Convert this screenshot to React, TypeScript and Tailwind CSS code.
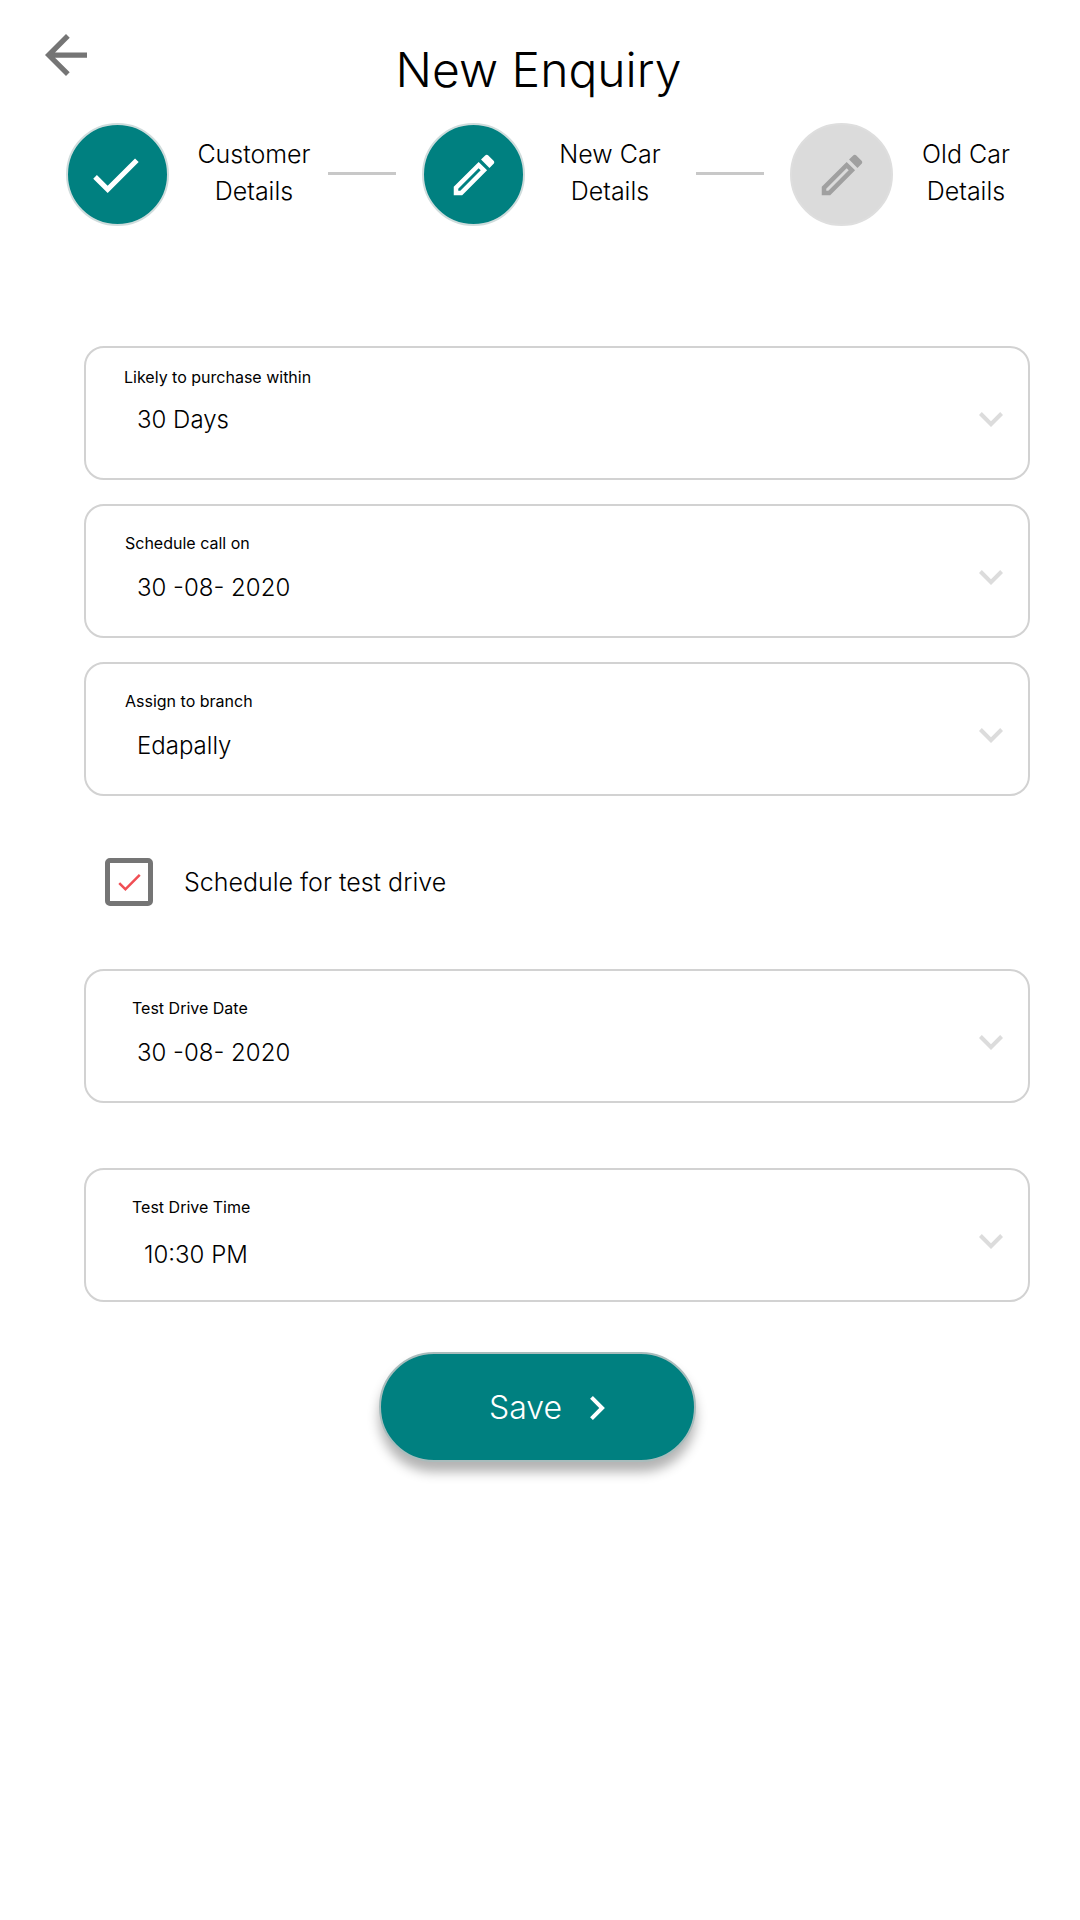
import { useState } from "react";

const CHECK = "M9 16.17L4.83 12l-1.42 1.41L9 19 21 7l-1.41-1.41z";
const PENCIL =
  "M14.06 9.02l.92.92L5.92 19H5v-.92l9.06-9.06M17.66 3c-.25 0-.51.1-.7.29l-1.83 1.83 3.75 3.75 1.83-1.83c.39-.39.39-1.02 0-1.41l-2.34-2.34c-.2-.2-.45-.29-.71-.29zm-3.6 3.19L3 17.25V21h3.75L17.81 9.94l-3.75-3.75z";
const ARROW_BACK = "M20 11H7.83l5.59-5.59L12 4l-8 8 8 8 1.41-1.41L7.83 13H20v-2z";
const CHEVRON_DOWN = "M16.59 8.59L12 13.17 7.41 8.59 6 10l6 6 6-6z";
const CHEVRON_RIGHT = "M10 6L8.59 7.41 13.17 12l-4.58 4.59L10 18l6-6z";

interface IconProps {
  path: string;
  viewBox?: string;
  className: string;
}

const Icon = ({ path, viewBox = "0 0 24 24", className }: IconProps) => (
  <svg viewBox={viewBox} fill="currentColor" aria-hidden="true" className={className}>
    <path d={path} />
  </svg>
);

const steps = [
  {
    lines: ["Customer", "Details"],
    icon: CHECK,
    viewBox: "1 0 24 24",
    iconClass: "size-[62px]",
    circle: "border-[#cfdcdc] bg-[#008080] text-white",
    label: "w-[120px]",
    connector: "ml-3.5",
  },
  {
    lines: ["New Car", "Details"],
    icon: PENCIL,
    viewBox: "0 0 24 24",
    iconClass: "size-[54px]",
    circle: "border-[#cfdcdc] bg-[#008080] text-white",
    label: "w-[120px]",
    connector: "ml-[26px]",
  },
  {
    lines: ["Old Car", "Details"],
    icon: PENCIL,
    viewBox: "0 0 24 24",
    iconClass: "size-[54px]",
    circle: "border-[#dedede] bg-[#dbdbdb] text-[#a0a0a0]",
    label: "w-24",
    connector: "",
  },
];

const Stepper = () => (
  <ol className="mt-[23px] flex items-center px-[66px]">
    {steps.map((step) => (
      <li key={step.lines[0]} className={step.connector ? "flex flex-auto items-center" : "flex items-center"}>
        <span
          className={`flex size-[103px] shrink-0 items-center justify-center rounded-full border-2 ${step.circle}`}
        >
          <Icon path={step.icon} viewBox={step.viewBox} className={step.iconClass} />
        </span>
        <span className={`ml-[25px] shrink-0 pb-1 text-center text-[25px] leading-[37px] ${step.label}`}>
          {step.lines[0]}
          <br />
          {step.lines[1]}
        </span>
        {step.connector && <span className={`mr-[26px] mb-0.5 h-[3px] flex-1 bg-[#c8c8c8] ${step.connector}`} />}
      </li>
    ))}
  </ol>
);

interface SelectFieldProps {
  id: string;
  label: string;
  value: string;
  top?: string;
  labelIndent?: string;
  valueClass?: string;
}

const SelectField = ({
  id,
  label,
  value,
  top = "pt-[25px]",
  labelIndent = "pl-[39px]",
  valueClass = "mt-[15px] pl-[51px]",
}: SelectFieldProps) => (
  <div className="flex h-[134px] rounded-[20px] border-2 border-[#d2d2d2] pr-[25px]">
    <div className={`flex flex-1 flex-col ${top}`}>
      <label htmlFor={id} className={`text-base leading-6 font-normal ${labelIndent}`}>
        {label}
      </label>
      <select
        id={id}
        defaultValue={value}
        className={`h-9 w-full appearance-none bg-transparent text-2xl leading-9 outline-none ${valueClass}`}
      >
        <option>{value}</option>
      </select>
    </div>
    <Icon path={CHEVRON_DOWN} viewBox="6 8.59 12 7.41" className="mt-3 h-[15px] w-6 self-center text-[#dcdcdc]" />
  </div>
);

export default function App() {
  const [testDrive, setTestDrive] = useState(true);

  return (
    <main className="min-h-screen bg-white font-['Inter',sans-serif] font-light text-black">
      <header className="grid grid-cols-[1fr_auto_1fr] items-start pt-[34px] pr-12 pl-[45px]">
        <button type="button" aria-label="Back" className="w-[42px] text-[#757575]">
          <Icon path={ARROW_BACK} viewBox="4 4 16 16" className="size-[42px]" />
        </button>
        <h1 className="mt-1.5 text-5xl leading-[60px]">New Enquiry</h1>
      </header>

      <Stepper />

      <form className="mt-[120px] pb-16" onSubmit={(e) => e.preventDefault()}>
        <div className="pr-[50px] pl-[84px]">
          <div className="flex flex-col gap-6">
            <SelectField
              id="purchase"
              label="Likely to purchase within"
              value="30 Days"
              top="pt-[17px]"
              labelIndent="pl-[38px]"
              valueClass="mt-[13px] pl-[51px]"
            />
            <SelectField id="call" label="Schedule call on" value="30 -08- 2020" />
            <SelectField id="branch" label="Assign to branch" value="Edapally" />
          </div>

          <div className="mt-[62px] flex items-center pl-[21px]">
            <span className="grid size-12 place-items-center">
              <input
                id="test-drive"
                type="checkbox"
                checked={testDrive}
                onChange={(e) => setTestDrive(e.target.checked)}
                className="size-12 appearance-none rounded-[5px] border-5 border-[#757575] [grid-area:1/1]"
              />
              {testDrive && (
                <Icon
                  path={CHECK}
                  viewBox="3.41 5.59 17.59 13.41"
                  className="pointer-events-none h-[17px] w-[23px] text-[#f04e54] [grid-area:1/1]"
                />
              )}
            </span>
            <label htmlFor="test-drive" className="pl-[31px] text-[25px] leading-9">
              Schedule for test drive
            </label>
          </div>

          <div className="mt-[63px] flex flex-col gap-[65px]">
            <SelectField id="drive-date" label="Test Drive Date" value="30 -08- 2020" labelIndent="pl-[46px]" />
            <SelectField
              id="drive-time"
              label="Test Drive Time"
              value="10:30 PM"
              labelIndent="pl-[46px]"
              valueClass="mt-[18px] pl-[58px]"
            />
          </div>
        </div>

        <div className="mt-[50px] flex justify-center pr-1.5">
          <button
            type="submit"
            className="flex h-[110px] w-[317px] items-center justify-center gap-7 rounded-full border-2 border-[#a9bcbc] bg-[#008080] pt-0.5 pl-5 text-[32px] leading-10 text-white shadow-[0_10px_12px_rgba(0,0,0,0.3)]"
          >
            Save
            <Icon path={CHEVRON_RIGHT} viewBox="8.59 6 7.41 12" className="h-6 w-[15px]" />
          </button>
        </div>
      </form>
    </main>
  );
}
